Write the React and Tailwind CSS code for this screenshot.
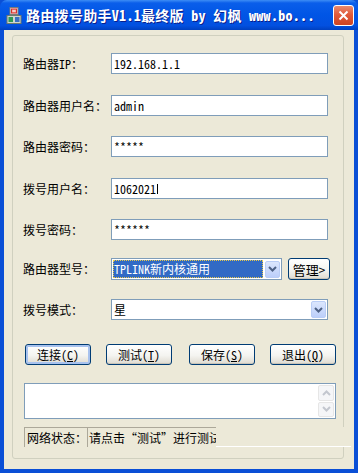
import React from 'react'

const FONT = "font-['Noto_Sans_Mono_CJK_SC','Noto_Sans_CJK_SC',sans-serif]"

function XpButton({ children, focused, className = '' }) {
  return (
    <div
      className={`flex items-center justify-center rounded-[3px] border border-[#003c74] bg-[linear-gradient(180deg,#ffffff_0%,#f4f4f0_55%,#dedad0_100%)] text-[12px] leading-none text-black ${
        focused ? 'shadow-[inset_0_0_0_2px_#a8c2ee]' : 'shadow-[inset_0_-1px_0_#c9c4b8]'
      } ${className}`}
    >
      {children}
    </div>
  )
}

function Field({ label, className = '', children }) {
  return (
    <div className={`flex h-[21px] items-center ${className}`}>
      <div className="w-[88px] text-[12px] leading-none text-black">{label}</div>
      {children}
    </div>
  )
}

function TextBox({ value }) {
  return (
    <div className="flex h-[21px] w-[217px] items-center border border-[#7f9db9] bg-white pl-[2px] text-[12px] leading-none text-black">
      {value}
    </div>
  )
}

function Chevron({ color = '#4d6185' }) {
  return (
    <svg width="9" height="6" viewBox="0 0 9 6">
      <path d="M1 1 L4.5 4.5 L8 1" fill="none" stroke={color} strokeWidth="2" />
    </svg>
  )
}

function DropArrow() {
  return (
    <div className="flex h-[17px] w-[15px] items-center justify-center rounded-[2px] border border-[#b9cdf6] bg-[linear-gradient(180deg,#dbe6fd_0%,#bccffa_100%)]">
      <Chevron />
    </div>
  )
}

function AppIcon() {
  return (
    <svg width="16" height="17" viewBox="0 0 16 17">
      <rect x="4" y="0.5" width="8" height="7" fill="#e8e8e8" stroke="#7a7a7a" />
      <rect x="5" y="1.5" width="6" height="5" fill="#d9312b" />
      <rect x="6.5" y="2.5" width="1" height="3" fill="#fff" />
      <rect x="8.5" y="2.5" width="1" height="3" fill="#fff" />
      <rect x="6.5" y="3.5" width="3" height="1" fill="#fff" />
      <rect x="1" y="8.5" width="14" height="8" fill="#cfd6cf" stroke="#6e7a6e" />
      <rect x="2.5" y="10" width="4.5" height="5" fill="#2f9a56" />
      <rect x="9" y="10" width="4.5" height="5" fill="#3a6fc4" />
    </svg>
  )
}

export default function App() {
  return (
    <div className={`flex h-[473px] w-[358px] flex-col overflow-hidden bg-[#0a4fd6] ${FONT}`}>
      {/* title bar */}
      <div className="flex h-[30px] shrink-0 items-center rounded-t-[7px] bg-[linear-gradient(180deg,#3d8df5_0%,#0a5eea_10%,#0055e5_50%,#0250e0_85%,#0040c0_100%)] pl-[6px] pr-[4px]">
        <AppIcon />
        <div className="ml-[4px] flex-1 whitespace-nowrap text-[14px] font-bold leading-none tracking-[0.3px] text-white [text-shadow:1px_1px_0_#0a1e8c]">
          路由拨号助手V1.1最终版 by 幻枫 www.bo...
        </div>
        <div className="flex h-[21px] w-[21px] items-center justify-center rounded-[3px] border border-white bg-[linear-gradient(180deg,#e88a6e_0%,#e15a3a_45%,#cf4422_100%)]">
          <svg width="11" height="11" viewBox="0 0 11 11">
            <path d="M1.5 1.5 L9.5 9.5 M9.5 1.5 L1.5 9.5" stroke="#fff" strokeWidth="2" />
          </svg>
        </div>
      </div>

      {/* client area with window frame */}
      <div className="flex flex-1 px-[4px] pb-[4px]">
        <div className="flex flex-1 flex-col bg-[#ece9d8] pb-[10px] pl-[8px] pr-[10px] pt-[5px]">
          <div className="flex flex-1 flex-col rounded-[3px] border border-[#d0d0bf] pl-[10px] pt-[17px]">
            <Field label="路由器IP：">
              <TextBox value="192.168.1.1" />
            </Field>
            <Field label="路由器用户名：" className="mt-[21px]">
              <TextBox value="admin" />
            </Field>
            <Field label="路由器密码：" className="mt-[20px]">
              <TextBox value="*****" />
            </Field>
            <Field label="拨号用户名：" className="mt-[21px]">
              <TextBox
                value={
                  <span className="flex items-center">
                    1062021<span className="ml-[1px] h-[10px] w-[1px] bg-black" />
                  </span>
                }
              />
            </Field>
            <Field label="拨号密码：" className="mt-[20px]">
              <TextBox value="******" />
            </Field>

            {/* router model */}
            <div className="mt-[18px] flex h-[22px] items-center">
              <div className="w-[88px] text-[12px] leading-none text-black">路由器型号：</div>
              <div className="flex h-[22px] w-[171px] items-center gap-[2px] border border-[#7f9db9] bg-white px-[1px]">
                <div className="flex h-[18px] flex-1 items-center bg-[#316ac5] pl-[1px] outline-1 outline-dotted outline-offset-[-1px] outline-[#e6c84a]">
                  <span className="text-[12px] leading-none text-white">TPLINK新内核通用</span>
                </div>
                <DropArrow />
              </div>
              <XpButton className="ml-[6px] h-[22px] w-[42px] text-[13px]">管理&gt;</XpButton>
            </div>

            {/* dial mode */}
            <Field label="拨号模式：" className="mt-[19px]">
              <div className="flex h-[21px] w-[217px] items-center border border-[#7f9db9] bg-white pl-[2px] pr-[1px]">
                <span className="flex-1 text-[12px] leading-none text-black">星</span>
                <DropArrow />
              </div>
            </Field>

            {/* buttons */}
            <div className="mt-[24px] ml-[2px] flex h-[21px]">
              <XpButton focused className="w-[66px]">
                连接(<span className="underline">C</span>)
              </XpButton>
              <XpButton className="ml-[15px] w-[66px]">
                测试(<span className="underline">T</span>)
              </XpButton>
              <XpButton className="ml-[17px] w-[66px]">
                保存(<span className="underline">S</span>)
              </XpButton>
              <XpButton className="ml-[15px] w-[66px]">
                退出(<span className="underline">Q</span>)
              </XpButton>
            </div>

            {/* log box */}
            <div className="ml-[1px] mt-[18px] flex h-[36px] w-[312px] justify-end border border-[#7f9db9] bg-white p-[1px]">
              <div className="flex w-[16px] flex-col gap-[1px]">
                <div className="flex flex-1 items-center justify-center rounded-[2px] border border-[#e6e6e6] bg-[#f5f6f8]">
                  <svg width="9" height="6" viewBox="0 0 9 6">
                    <path d="M1 5 L4.5 1.5 L8 5" fill="none" stroke="#c3c7cf" strokeWidth="2" />
                  </svg>
                </div>
                <div className="flex flex-1 items-center justify-center rounded-[2px] border border-[#e6e6e6] bg-[#f5f6f8]">
                  <Chevron color="#c3c7cf" />
                </div>
              </div>
            </div>

            {/* status bar */}
            <div className="ml-[1px] mr-[-8px] mt-[8px] flex h-[20px] bg-[#ece9d8] text-[12px] leading-none text-black">
              <div className="flex w-[63px] items-center border-l border-t border-[#aca899] pl-[2px]">网络状态：</div>
              <div className="flex w-[129px] items-center overflow-hidden whitespace-nowrap border-l border-t border-[#aca899] pl-[1px]">
                请点击“测试”进行测试
              </div>
              <div className="flex-1 border-b border-white" />
            </div>
          </div>
        </div>
      </div>
    </div>
  )
}
